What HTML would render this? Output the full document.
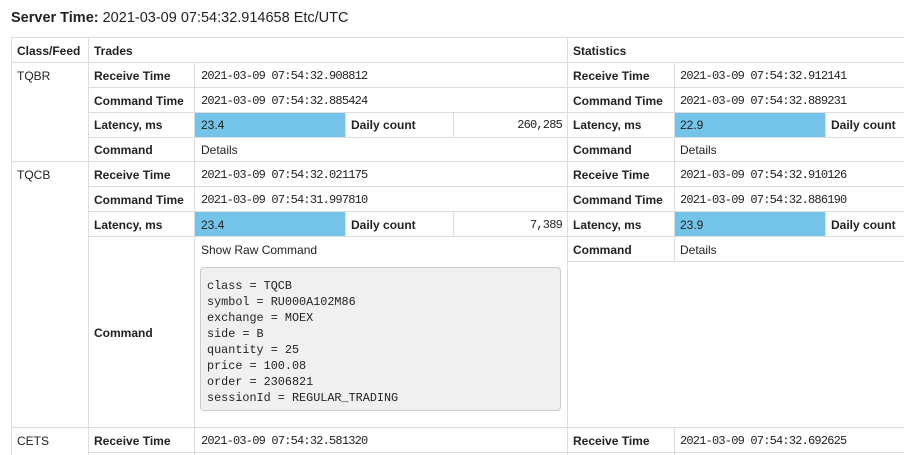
<!DOCTYPE html>
<html><head><meta charset="utf-8"><style>
body{margin:0;width:904px;height:455px;overflow:hidden;background:#fff;font-family:"Liberation Sans",sans-serif;color:#222;position:relative}
.h{position:absolute;height:1px;background:#ddd}
.v{position:absolute;width:1px;background:#ddd}
.t{position:absolute;font-size:12px;line-height:14px;white-space:nowrap}
.b{font-weight:bold}
.m{font-family:"Liberation Mono",monospace;font-size:12px;letter-spacing:-0.8px}
.blue{position:absolute;background:#74c3e8}
pre{position:absolute;left:200px;top:267px;width:361px;height:144px;margin:0;background:#f0f0f0;border:1px solid #ccc;border-radius:4px;font-family:"Liberation Mono",monospace;font-size:11.8px;line-height:16px;padding:10px 0 0 6px;box-sizing:border-box;color:#222}
</style></head><body>
<div class="t" style="left:11px;top:9px;font-size:14.5px;line-height:18px"><b>Server Time:</b> 2021-03-09 07:54:32.914658 Etc/UTC</div>

<div class="blue" style="left:195px;top:113px;width:150px;height:24px"></div>
<div class="blue" style="left:675px;top:113px;width:150px;height:24px"></div>
<div class="blue" style="left:195px;top:212px;width:150px;height:24px"></div>
<div class="blue" style="left:675px;top:212px;width:150px;height:24px"></div>

<div class="h" style="left:11px;top:37px;width:893px"></div>
<div class="h" style="left:11px;top:62px;width:893px"></div>
<div class="h" style="left:88px;top:87px;width:816px"></div>
<div class="h" style="left:88px;top:112px;width:816px"></div>
<div class="h" style="left:88px;top:137px;width:816px"></div>
<div class="h" style="left:11px;top:161px;width:893px"></div>
<div class="h" style="left:88px;top:186px;width:816px"></div>
<div class="h" style="left:88px;top:211px;width:816px"></div>
<div class="h" style="left:88px;top:236px;width:816px"></div>
<div class="h" style="left:567px;top:261px;width:337px"></div>
<div class="h" style="left:11px;top:427px;width:893px"></div>
<div class="h" style="left:88px;top:452px;width:816px"></div>

<div class="v" style="left:11px;top:37px;height:418px"></div>
<div class="v" style="left:88px;top:37px;height:418px"></div>
<div class="v" style="left:194px;top:62px;height:393px"></div>
<div class="v" style="left:567px;top:37px;height:418px"></div>
<div class="v" style="left:674px;top:62px;height:199px"></div>
<div class="v" style="left:674px;top:427px;height:28px"></div>
<div class="v" style="left:345px;top:112px;height:25px"></div>
<div class="v" style="left:453px;top:112px;height:25px"></div>
<div class="v" style="left:825px;top:112px;height:25px"></div>
<div class="v" style="left:345px;top:211px;height:25px"></div>
<div class="v" style="left:453px;top:211px;height:25px"></div>
<div class="v" style="left:825px;top:211px;height:25px"></div>

<div class="t b" style="left:17px;top:44px">Class/Feed</div>
<div class="t b" style="left:94px;top:44px">Trades</div>
<div class="t b" style="left:573px;top:44px">Statistics</div>

<div class="t" style="left:17px;top:69px">TQBR</div>
<div class="t b" style="left:94px;top:69px">Receive Time</div>
<div class="t m" style="left:201px;top:69px">2021-03-09 07:54:32.908812</div>
<div class="t b" style="left:573px;top:69px">Receive Time</div>
<div class="t m" style="left:680px;top:69px">2021-03-09 07:54:32.912141</div>
<div class="t b" style="left:94px;top:94px">Command Time</div>
<div class="t m" style="left:201px;top:94px">2021-03-09 07:54:32.885424</div>
<div class="t b" style="left:573px;top:94px">Command Time</div>
<div class="t m" style="left:680px;top:94px">2021-03-09 07:54:32.889231</div>
<div class="t b" style="left:94px;top:118px">Latency, ms</div>
<div class="t" style="left:201px;top:118px">23.4</div>
<div class="t b" style="left:351px;top:118px">Daily count</div>
<div class="t m" style="left:460px;top:118px;width:102px;text-align:right">260,285</div>
<div class="t b" style="left:573px;top:118px">Latency, ms</div>
<div class="t" style="left:680px;top:118px">22.9</div>
<div class="t b" style="left:831px;top:118px">Daily count</div>
<div class="t b" style="left:94px;top:143px">Command</div>
<div class="t" style="left:201px;top:143px">Details</div>
<div class="t b" style="left:573px;top:143px">Command</div>
<div class="t" style="left:680px;top:143px">Details</div>

<div class="t" style="left:17px;top:168px">TQCB</div>
<div class="t b" style="left:94px;top:168px">Receive Time</div>
<div class="t m" style="left:201px;top:168px">2021-03-09 07:54:32.021175</div>
<div class="t b" style="left:573px;top:168px">Receive Time</div>
<div class="t m" style="left:680px;top:168px">2021-03-09 07:54:32.910126</div>
<div class="t b" style="left:94px;top:193px">Command Time</div>
<div class="t m" style="left:201px;top:193px">2021-03-09 07:54:31.997810</div>
<div class="t b" style="left:573px;top:193px">Command Time</div>
<div class="t m" style="left:680px;top:193px">2021-03-09 07:54:32.886190</div>
<div class="t b" style="left:94px;top:218px">Latency, ms</div>
<div class="t" style="left:201px;top:218px">23.4</div>
<div class="t b" style="left:351px;top:218px">Daily count</div>
<div class="t m" style="left:460px;top:218px;width:102px;text-align:right">7,389</div>
<div class="t b" style="left:573px;top:218px">Latency, ms</div>
<div class="t" style="left:680px;top:218px">23.9</div>
<div class="t b" style="left:831px;top:218px">Daily count</div>
<div class="t" style="left:201px;top:243px">Show Raw Command</div>
<div class="t b" style="left:573px;top:243px">Command</div>
<div class="t" style="left:680px;top:243px">Details</div>
<div class="t b" style="left:94px;top:326px">Command</div>
<pre>class = TQCB
symbol = RU000A102M86
exchange = MOEX
side = B
quantity = 25
price = 100.08
order = 2306821
sessionId = REGULAR_TRADING</pre>

<div class="t" style="left:17px;top:434px">CETS</div>
<div class="t b" style="left:94px;top:434px">Receive Time</div>
<div class="t m" style="left:201px;top:434px">2021-03-09 07:54:32.581320</div>
<div class="t b" style="left:573px;top:434px">Receive Time</div>
<div class="t m" style="left:680px;top:434px">2021-03-09 07:54:32.692625</div>
</body></html>
